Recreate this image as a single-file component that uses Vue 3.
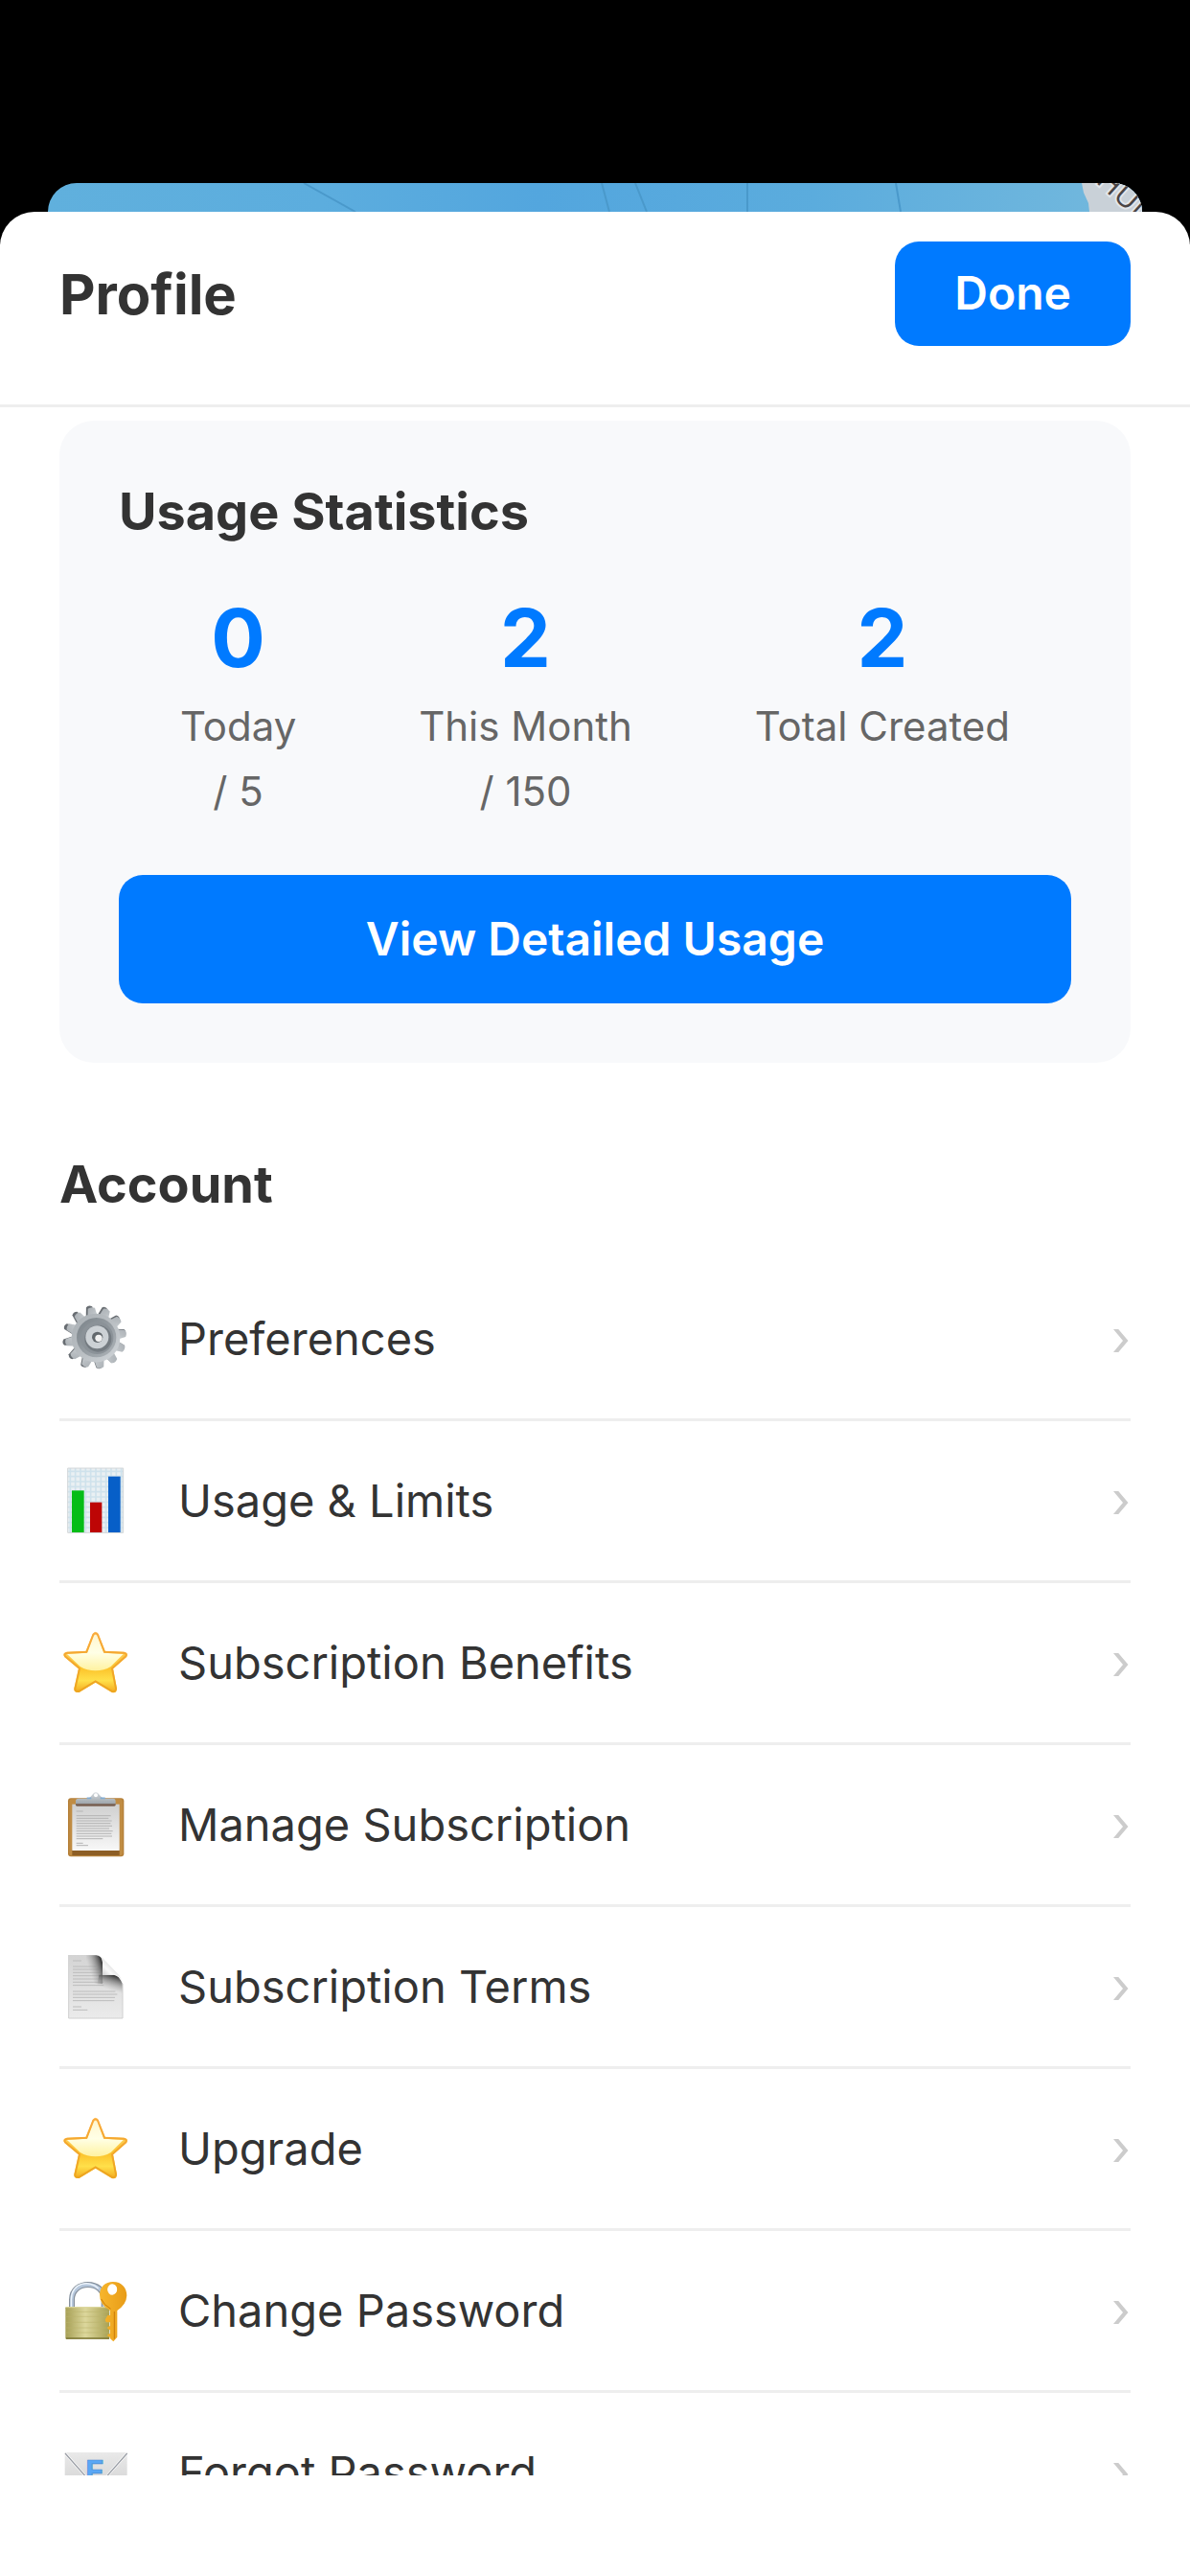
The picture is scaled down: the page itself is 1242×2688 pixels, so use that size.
<script setup>
const stats = [
  { value: 0, label: 'Today', limit: '/ 5' },
  { value: 2, label: 'This Month', limit: '/ 150' },
  { value: 2, label: 'Total Created', limit: '' },
]

const items = [
  { icon: 'gear', label: 'Preferences' },
  { icon: 'chart', label: 'Usage & Limits' },
  { icon: 'star', label: 'Subscription Benefits' },
  { icon: 'clipboard', label: 'Manage Subscription' },
  { icon: 'page', label: 'Subscription Terms' },
  { icon: 'star', label: 'Upgrade' },
  { icon: 'lock', label: 'Change Password' },
  { icon: 'mail', label: 'Forgot Password' },
]

const viewBoxes = {
  gear: '36 57 228 228',
  chart: '36 54 228 228',
  star: '36 51 228 228',
  clipboard: '36 48 228 228',
  page: '36 45 228 228',
  lock: '36 39 228 228',
  mail: '36 3 228 228',
}
</script>

<template>
  <div class="screen">
    <svg class="defs" aria-hidden="true">
      <defs>
        <linearGradient id="gearFace" x1="0" y1="0" x2="1" y2="1">
          <stop offset="0" stop-color="#a9afb4" />
          <stop offset="0.5" stop-color="#b9bec2" />
          <stop offset="1" stop-color="#d0d5d9" />
        </linearGradient>
        <linearGradient id="gearDish" x1="0" y1="0" x2="1" y2="1">
          <stop offset="0" stop-color="#7b8389" />
          <stop offset="1" stop-color="#aeb4b9" />
        </linearGradient>
        <linearGradient id="starFill" x1="0" y1="0" x2="0" y2="1">
          <stop offset="0" stop-color="#fdd98a" />
          <stop offset="0.6" stop-color="#fcc42c" />
          <stop offset="0.8" stop-color="#ffe04a" />
          <stop offset="1" stop-color="#f3a81c" />
        </linearGradient>
        <linearGradient id="starGlow" x1="0" y1="0" x2="0" y2="1">
          <stop offset="0" stop-color="#fff6cf" />
          <stop offset="0.5" stop-color="#ffffe6" />
          <stop offset="1" stop-color="#fff2a0" />
        </linearGradient>
        <linearGradient id="starEdge" x1="0" y1="0" x2="0" y2="1">
          <stop offset="0" stop-color="#f9a93c" />
          <stop offset="1" stop-color="#eda51f" />
        </linearGradient>
        <linearGradient id="paper" x1="0" y1="0" x2="0" y2="1">
          <stop offset="0" stop-color="#cfcfcf" />
          <stop offset="1" stop-color="#f8f8f8" />
        </linearGradient>
        <linearGradient id="clip" x1="0" y1="0" x2="0" y2="1">
          <stop offset="0" stop-color="#d5dade" />
          <stop offset="1" stop-color="#9da4aa" />
        </linearGradient>
        <linearGradient id="pageFill" x1="0" y1="0" x2="0" y2="1">
          <stop offset="0" stop-color="#d4d4d4" />
          <stop offset="1" stop-color="#ebebeb" />
        </linearGradient>
        <linearGradient id="shadeLeft" gradientUnits="userSpaceOnUse" x1="171" y1="90" x2="128" y2="104">
          <stop offset="0" stop-color="#3a3a3a" />
          <stop offset="0.4" stop-color="#777" stop-opacity="0.7" />
          <stop offset="1" stop-color="#aaa" stop-opacity="0" />
        </linearGradient>
        <linearGradient id="shadeBelow" gradientUnits="userSpaceOnUse" x1="204" y1="124" x2="190" y2="168">
          <stop offset="0" stop-color="#3a3a3a" />
          <stop offset="0.4" stop-color="#777" stop-opacity="0.7" />
          <stop offset="1" stop-color="#aaa" stop-opacity="0" />
        </linearGradient>
        <linearGradient id="pageCurl" gradientUnits="userSpaceOnUse" x1="170" y1="122" x2="202" y2="90">
          <stop offset="0" stop-color="#d0d0d0" />
          <stop offset="0.5" stop-color="#fafafa" />
          <stop offset="1" stop-color="#dedede" />
        </linearGradient>
        <linearGradient id="brass" x1="0" y1="0" x2="1" y2="0">
          <stop offset="0" stop-color="#a69f55" />
          <stop offset="0.45" stop-color="#dcd79c" />
          <stop offset="1" stop-color="#a8a052" />
        </linearGradient>
        <linearGradient id="gold" x1="0" y1="0" x2="1" y2="0">
          <stop offset="0" stop-color="#f7b62d" />
          <stop offset="1" stop-color="#e89c17" />
        </linearGradient>
        <linearGradient id="envelope" x1="0" y1="0" x2="0" y2="1">
          <stop offset="0" stop-color="#e9e9e9" />
          <stop offset="1" stop-color="#cfcfcf" />
        </linearGradient>
        <linearGradient id="water" x1="0" y1="0" x2="1" y2="0">
          <stop offset="0" stop-color="#60b0dd" />
          <stop offset="0.25" stop-color="#5cadde" />
          <stop offset="0.45" stop-color="#53a6de" />
          <stop offset="0.7" stop-color="#5bacdd" />
          <stop offset="1" stop-color="#74b9dd" />
        </linearGradient>
      </defs>
    </svg>

    <svg class="map" viewBox="0 0 1142 30" preserveAspectRatio="xMaxYMin slice" aria-hidden="true">
      <rect width="1142" height="30" fill="url(#water)" />
      <g fill="none" stroke="#4a99cb" stroke-width="2">
        <path d="M267 0 321 30M578 0 586 30M613 0 625 30M730 0V30M885 0 890 30" />
      </g>
      <path d="M1079 0 1081 10 1086 21 1087 30H1142V0Z" fill="#c9d1d8" />
      <text class="map-label" transform="translate(1093 -1) rotate(42)">HUN</text>
    </svg>

    <main class="sheet">
      <header class="header">
        <h1 class="title">Profile</h1>
        <button class="button done" type="button">Done</button>
      </header>

      <div class="content">
        <section class="card">
          <h2 class="heading">Usage Statistics</h2>
          <div class="stats">
            <div v-for="stat in stats" :key="stat.label" class="stat">
              <strong class="value">{{ stat.value }}</strong>
              <span class="label">{{ stat.label }}</span>
              <span v-if="stat.limit" class="label">{{ stat.limit }}</span>
            </div>
          </div>
          <button class="button wide" type="button">View Detailed Usage</button>
        </section>

        <section class="account">
          <h2 class="heading">Account</h2>
          <ul class="list">
            <li v-for="item in items" :key="item.label" class="item">
              <a class="row" href="#">
                <svg class="icon" :viewBox="viewBoxes[item.icon]" aria-hidden="true">
                  <g v-if="item.icon === 'gear'">
                    <g fill="#686d72">
                      <path v-for="n in 12" :key="n" d="M132 110 138 72Q147 64 157 72L164 110Z" :transform="`translate(-5 -2) rotate(${n * 30 - 8} 150 168)`" />
                    </g>
                    <g fill="url(#gearFace)">
                      <path v-for="n in 12" :key="n" d="M132 110 138 75Q149 68 160 75L166 110Z" :transform="`rotate(${n * 30 - 8} 150 168)`" />
                      <circle cx="150" cy="168" r="76" />
                    </g>
                    <circle cx="152" cy="167" r="62" fill="url(#gearDish)" />
                    <circle cx="154" cy="168" r="51" fill="#8b9298" />
                    <circle cx="157" cy="170" r="42" fill="#747b81" />
                    <circle cx="154" cy="166" r="36" fill="#ccd1d5" />
                    <circle cx="155" cy="166" r="17" fill="#62686d" />
                    <circle cx="159" cy="169" r="11" fill="#f2f2f2" />
                  </g>

                  <g v-else-if="item.icon === 'chart'">
                    <rect x="62" y="66" width="174" height="202" fill="#eaf0f3" />
                    <path d="M70 66V268M86 66V268M102 66V268M118 66V268M134 66V268M150 66V268M166 66V268M182 66V268M198 66V268M214 66V268M230 66V268M62 76H236M62 92H236M62 108H236M62 124H236M62 140H236M62 156H236M62 172H236M62 188H236M62 204H236M62 220H236M62 236H236M62 252H236" stroke="#cfe2ec" stroke-width="5" />
                    <path d="M62 66H236V268H62Z" fill="none" stroke="#d2d6d8" stroke-width="3" />
                    <rect x="75" y="136" width="38" height="131" fill="#05bd17" />
                    <rect x="132" y="173" width="37" height="94" fill="#bd0505" />
                    <rect x="189" y="92" width="38" height="175" fill="#075fc8" />
                  </g>

                  <g v-else-if="item.icon === 'star'">
                    <path d="M140 75Q149 62 158 75L179 128 238 131Q254 134 247 146L204 184 216 246Q216 262 200 258L149 227 98 258Q80 260 82 246L96 184 51 146Q44 134 60 131L119 128Z" fill="url(#starFill)" />
                    <path d="M143 82Q149 74 155 82L175 134 236 138 197 177Q176 190 149 190T101 177L60 138 123 134Z" fill="url(#starGlow)" />
                    <path d="M142 77Q149 68 156 77L177 131 238 134Q249 137 244 145L201 183 213 246Q212 257 200 254L149 223 98 254Q85 256 85 246L99 183 54 145Q49 137 60 134L121 131Z" fill="none" stroke="url(#starEdge)" stroke-width="6" />
                  </g>

                  <g v-else-if="item.icon === 'clipboard'">
                    <rect x="63" y="79" width="175" height="183" rx="9" fill="#b47f38" />
                    <rect x="67" y="82" width="167" height="176" rx="7" fill="#c08c43" />
                    <rect x="76" y="238" width="148" height="20" fill="#8d5e25" />
                    <rect x="76" y="98" width="148" height="145" fill="url(#paper)" />
                    <path d="M89 120H110M89 134H197M89 142H190M89 150H200M89 158H196M89 166H201M89 174H192M89 182H203M89 190H199M89 198H201M89 206H172M89 220H110M89 227H126" stroke="#b4b4b4" stroke-width="3" />
                    <rect x="87" y="94" width="125" height="10" rx="4" fill="#785f50" />
                    <path d="M87 97V88Q87 80 96 80H121Q129 80 134 74L139 68Q150 54 161 68L167 75Q172 80 180 80H204Q212 80 212 89V97Z" fill="url(#clip)" />
                    <path d="M122 79H136M164 79H179" stroke="#81acd3" stroke-width="5" />
                    <circle cx="150" cy="70" r="6" fill="#fff" />
                  </g>

                  <g v-else-if="item.icon === 'page'">
                    <path d="M65 60H151Q171 62 171 82V122H206Q222 123 234 150V258H65Z" fill="url(#pageFill)" />
                    <path d="M78 78H105M78 96H151M78 105H160M78 115H166M78 125H166M78 135H170M78 145H174M78 155H175M78 174H211M78 183H217M78 193H210M78 203H208M78 222H105M78 232H124" stroke="#bcbcbc" stroke-width="3" />
                    <path d="M120 61H151Q171 63 171 84V150H120Z" fill="url(#shadeLeft)" />
                    <path d="M160 122H206Q224 124 234 152V180H150Z" fill="url(#shadeBelow)" />
                    <path d="M151 60Q170 62 171 82V122H206Q222 123 232 145Q231 132 222 122L171 69Q162 60 151 60Z" fill="url(#pageCurl)" />
                    <path d="M65 60V258H234V150" fill="none" stroke="#d0d0d0" stroke-width="3" />
                  </g>

                  <g v-else-if="item.icon === 'lock'">
                    <path d="M75 145V119C75 56 176 56 176 119V145" fill="none" stroke="#858f9b" stroke-width="18" />
                    <path d="M75 145V119C75 57 176 57 176 119V145" fill="none" stroke="#b6c7dc" stroke-width="11" />
                    <path d="M73 141V119C74 64 132 56 158 84" fill="none" stroke="#eef5fc" stroke-width="4" />
                    <rect x="55" y="141" width="138" height="102" rx="4" fill="url(#brass)" />
                    <path d="M56 157H192M56 172H192M56 190H192M56 207H192M56 222H192" stroke="#bbb46d" stroke-width="3" opacity="0.5" />
                    <path d="M57 240H192" stroke="#7e7838" stroke-width="5" />
                    <path d="M57 143H191" stroke="#ded9a1" stroke-width="3" />
                    <path fill-rule="evenodd" d="M204 63C231 63 247 82 247 106Q246 134 217 153V236L205 250 195 241V236Q184 234 187 228L195 225V214Q184 211 187 205L195 201V190H185Q178 188 180 180L187 168H195V153Q161 135 162 103C163 78 180 63 204 63ZM201 70A15 17 0 1 0 202 104A15 17 0 1 0 201 70Z" fill="url(#gold)" />
                    <circle cx="202" cy="87" r="14" fill="#fff" />
                    <path d="M208 156V242M167 117Q174 135 197 148" fill="none" stroke="#c97c0a" stroke-width="3" />
                  </g>

                  <g v-else>
                    <rect x="53" y="54" width="195" height="134" fill="url(#envelope)" />
                    <path d="M54 57 124 136M248 57 178 136" stroke="#fff" stroke-width="8" />
                    <path d="M54 57 124 136M248 57 178 136" stroke="#9b9fa6" stroke-width="4" />
                    <path d="M53 187 120 132M248 187 182 132" stroke="#a9adb2" stroke-width="3" />
                    <text class="stamp" x="118" y="150">E</text>
                  </g>
                </svg>
                <span class="name">{{ item.label }}</span>
                <span class="chevron" aria-hidden="true">›</span>
              </a>
            </li>
          </ul>
        </section>
      </div>
    </main>
  </div>
</template>

<style>
body {
  margin: 0;
  background: #000;
}
</style>

<style scoped>
.screen {
  box-sizing: border-box;
  display: flex;
  flex-direction: column;
  height: 100vh;
  padding-top: 191px;
  background: #000;
  color: #333;
  font-family: Inter, Roboto, sans-serif;
}

.defs {
  position: absolute;
  width: 0;
  height: 0;
}

.map {
  display: block;
  flex: none;
  width: auto;
  height: 30px;
  margin: 0 50px;
  border-radius: 30px 30px 0 0;
}

.map-label {
  fill: #4a4545;
  stroke: #e3e6ea;
  stroke-width: 4px;
  paint-order: stroke;
  font-family: "Open Sans", sans-serif;
  font-size: 32px;
  font-weight: 500;
}

.sheet {
  flex: 1;
  display: flex;
  flex-direction: column;
  min-height: 0;
  box-sizing: border-box;
  padding-bottom: 105px;
  border-radius: 36px 36px 0 0;
  background: #fff;
}

.header {
  flex: none;
  display: flex;
  align-items: center;
  justify-content: space-between;
  padding: 31px 62px 61px;
  border-bottom: 3px solid #eee;
}

.title {
  margin: 0;
  font-size: 58px;
  line-height: 72px;
  font-weight: 700;
}

.button {
  border: 0;
  border-radius: 25px;
  background: #007aff;
  color: #fff;
  font-family: inherit;
  font-size: 48px;
  font-weight: 600;
  line-height: 60px;
}

.done {
  padding: 24px 62px 25px;
}

.content {
  flex: 1;
  min-height: 0;
  overflow-y: auto;
  scrollbar-width: none;
  padding: 14px 62px 0;
}

.card {
  padding: 62px;
  border-radius: 36px;
  background: #f8f9fb;
}

.heading {
  margin: 0;
  font-size: 54px;
  line-height: 66px;
  font-weight: 700;
}

.stats {
  display: flex;
  justify-content: space-around;
  margin: 49px 0 61px;
}

.stat {
  display: flex;
  flex-direction: column;
  align-items: center;
  gap: 16px;
}

.value {
  color: #007aff;
  font-size: 84px;
  line-height: 100px;
  font-weight: 700;
}

.label {
  color: #666;
  font-size: 42px;
  line-height: 52px;
}

.wide {
  display: block;
  width: 100%;
  padding: 37px;
}

.account {
  padding-top: 94px;
}

.list {
  margin: 45px 0 0;
  padding: 0;
  list-style: none;
}

.item {
  border-bottom: 3px solid #eee;
}

.row {
  display: flex;
  align-items: center;
  height: 166px;
  color: inherit;
  text-decoration: none;
}

.icon {
  flex: none;
  width: 76px;
  height: 76px;
  margin-right: 48px;
}

.stamp {
  fill: #5aa7f5;
  stroke: #4a8cd0;
  stroke-width: 2px;
  font-family: Inter, sans-serif;
  font-size: 96px;
  font-weight: 700;
}

.name {
  flex: 1;
  font-size: 47px;
  line-height: 60px;
}

.chevron {
  color: #ccc;
  font-size: 52px;
  line-height: 60px;
}
</style>
